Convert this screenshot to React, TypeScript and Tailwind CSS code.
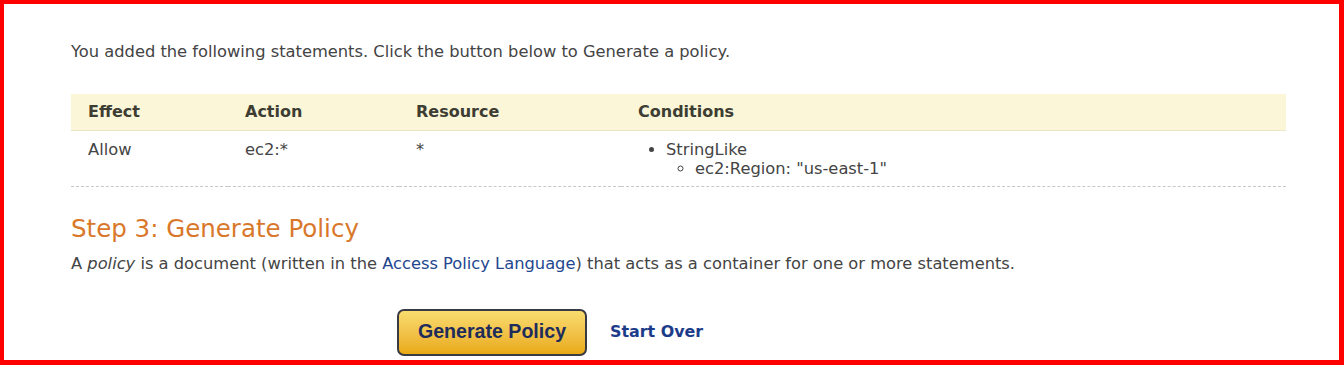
import React from 'react'

const statements = [
  {
    effect: 'Allow',
    action: 'ec2:*',
    resource: '*',
    conditions: [{ op: 'StringLike', items: ['ec2:Region: "us-east-1"'] }],
  },
]

export default function App() {
  return (
    <div className="h-[365px] w-[1344px] overflow-hidden border-t-4 border-l-4 border-r-[5px] border-b-[5px] border-[#ff0000] bg-white font-['DejaVu_Sans',Verdana,sans-serif] text-[#444]">
      <div className="pl-[67px] pr-[53px] pt-[38px]">
        <p className="text-[16.3px] leading-[20px]">
          You added the following statements. Click the button below to Generate a policy.
        </p>

        <table className="mt-[32px] w-full border-collapse text-[16.3px] leading-[19px]">
          <thead>
            <tr className="border-b border-[#ebe7c4] bg-[#faf6d7] text-left text-[#3d3d33]">
              <th className="h-[36px] w-[157px] pl-[17px] text-[16px] font-bold">Effect</th>
              <th className="w-[171px] pl-[17px] text-[16px] font-bold">Action</th>
              <th className="w-[222px] pl-[17px] text-[16px] font-bold">Resource</th>
              <th className="pl-[17px] text-[16px] font-bold">Conditions</th>
            </tr>
          </thead>
          <tbody>
            {statements.map((s, i) => (
              <tr key={i} className="border-b border-dashed border-[#c8c8c8] align-top">
                <td className="pl-[17px] pt-[9px] pb-[8px]">{s.effect}</td>
                <td className="pl-[17px] pt-[9px]">{s.action}</td>
                <td className="pl-[17px] pt-[9px]">{s.resource}</td>
                <td className="pl-[17px] pt-[9px] pb-[8px]">
                  <ul className="list-disc pl-[28px]">
                    {s.conditions.map(c => (
                      <li key={c.op}>
                        {c.op}
                        <ul className="list-[circle] pl-[29px]">
                          {c.items.map(it => (
                            <li key={it}>{it}</li>
                          ))}
                        </ul>
                      </li>
                    ))}
                  </ul>
                </td>
              </tr>
            ))}
          </tbody>
        </table>

        <h2 className="mt-[27px] text-[24.5px] leading-[30px] text-[#d9782b]">Step 3: Generate Policy</h2>
        <p className="mt-[10px] text-[16.3px] leading-[20px]">
          A <em>policy</em> is a document (written in the{' '}
          <a href="#" className="text-[#23468f]">Access Policy Language</a>) that acts as a container for one or
          more statements.
        </p>

        <div className="mt-[35px] flex items-center pl-[326px]">
          <button
            type="button"
            className="h-[47px] w-[190px] rounded-[7px] border-2 border-[#3a3a44] bg-gradient-to-b from-[#f9dc6e] to-[#e9aa0c] font-['Liberation_Sans',Arial,sans-serif] text-[19.6px] font-bold text-[#1e2c5c]"
          >
            Generate Policy
          </button>
          <a href="#" className="ml-[23px] text-[15.9px] font-bold text-[#1c3c8a]">
            Start Over
          </a>
        </div>
      </div>
    </div>
  )
}
